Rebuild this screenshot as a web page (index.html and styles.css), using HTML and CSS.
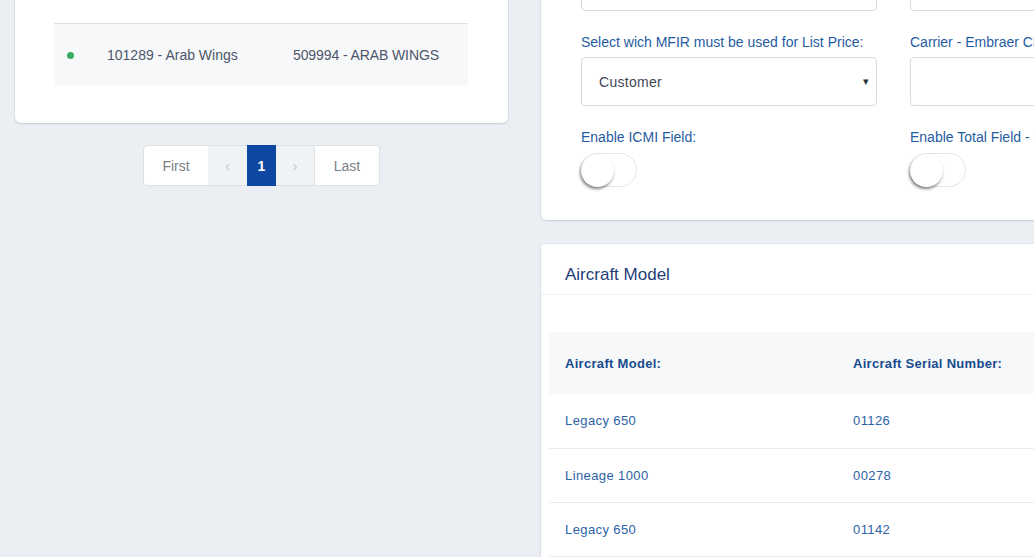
FILE: index.html
```html
<!DOCTYPE html>
<html lang="en">
<head>
<meta charset="utf-8">
<title>Customer settings</title>
<link rel="stylesheet" href="styles.css">
</head>
<body>
<div class="page">
  <div class="col-left">
    <div class="card list-card">
      <div class="list-row">
        <span class="status-dot"></span>
        <span class="cell-customer">101289 - Arab Wings</span>
        <span class="cell-operator">509994 - ARAB WINGS</span>
      </div>
    </div>
    <div class="pager-wrap">
      <nav class="pager">
        <span class="pg pg-text">First</span>
        <span class="pg pg-arrow">&#8249;</span>
        <span class="pg pg-active">1</span>
        <span class="pg pg-arrow pg-next">&#8250;</span>
        <span class="pg pg-text pg-last">Last</span>
      </nav>
    </div>
  </div>

  <div class="col-right">
    <div class="card form-card">
      <div class="form-grid">
        <div class="form-group">
          <label class="label">Customer Name:</label>
          <div class="input"></div>
        </div>
        <div class="form-group">
          <label class="label">Operator Name:</label>
          <div class="input"></div>
        </div>
        <div class="form-group">
          <label class="label">Select wich MFIR must be used for List Price:</label>
          <div class="input select"><span>Customer</span><span class="caret">&#9662;</span></div>
        </div>
        <div class="form-group">
          <label class="label">Carrier - Embraer Client Code:</label>
          <div class="input"></div>
        </div>
        <div class="form-group last">
          <label class="label">Enable ICMI Field:</label>
          <div class="toggle"><span class="knob"></span></div>
        </div>
        <div class="form-group last">
          <label class="label">Enable Total Field - Catalog:</label>
          <div class="toggle"><span class="knob"></span></div>
        </div>
      </div>
    </div>

    <div class="card aircraft-card">
      <div class="card-header">Aircraft Model</div>
      <div class="card-body">
        <table class="ac-table">
          <thead>
            <tr><th class="c1">Aircraft Model:</th><th>Aircraft Serial Number:</th><th>Action</th></tr>
          </thead>
          <tbody>
            <tr><td class="c1">Legacy 650</td><td>01126</td><td></td></tr>
            <tr><td class="c1">Lineage 1000</td><td>00278</td><td></td></tr>
            <tr><td class="c1">Legacy 650</td><td>01142</td><td></td></tr>
          </tbody>
        </table>
      </div>
    </div>
  </div>
</div>
</body>
</html>
```

FILE: styles.css
```css
* { box-sizing: border-box; }
html, body {
  margin: 0;
  padding: 0;
  background: #ebeff3;
  overflow: hidden;
  width: 1034px;
  height: 557px;
}
body {
  font-family: "Liberation Sans", Arial, sans-serif;
  color: #4a5468;
}
.page {
  display: flex;
  align-items: flex-start;
  gap: 33px;
  margin-top: -94px;
  padding-left: 15px;
  width: 1400px;
}
.col-left {
  width: 493px;
  flex: none;
}
.col-right {
  width: 760px;
  flex: none;
  display: flex;
  flex-direction: column;
  gap: 24px;
}
.card {
  background: #fff;
  border-radius: 6px;
  box-shadow: 0 1px 2px rgba(60, 80, 110, 0.18), 0 0 0 1px rgba(210, 218, 228, 0.35);
}

/* left list card */
.list-card {
  padding: 117px 40px 37px 39px;
}
.list-row {
  display: flex;
  align-items: center;
  height: 63px;
  background: #f7f8f9;
  border-top: 1px solid #dcdfe3;
  font-size: 14px;
  color: #4c566a;
}
.status-dot {
  width: 7px;
  height: 7px;
  border-radius: 50%;
  background: #3aab62;
  margin-left: 13px;
  flex: none;
}
.cell-customer {
  margin-left: 33px;
  width: 186px;
}
.cell-operator {
  letter-spacing: -0.1px;
}

/* pagination */
.pager-wrap {
  display: flex;
  justify-content: center;
  padding-top: 22px;
}
.pager {
  display: flex;
  height: 41px;
  border: 1px solid #dde1e6;
  border-radius: 4px;
  background: #fff;
  font-size: 14px;
}
.pg {
  display: flex;
  align-items: center;
  justify-content: center;
}
.pg-text {
  width: 64px;
  color: #7a7f86;
}
.pg-last {
  width: 65px;
  border-left: 1px solid #dde1e6;
}
.pg-arrow {
  width: 39px;
  background: #f0f3f6;
  color: #c5c9ce;
  font-size: 15px;
}
.pg-next {
  width: 38px;
}
.pg-active {
  width: 29px;
  margin: -1px 0;
  background: #0e47a1;
  color: #fff;
  font-weight: bold;
}

/* form card */
.form-card {
  padding: 32px 40px 33px 40px;
}
.form-grid {
  display: grid;
  grid-template-columns: 296px 296px;
  column-gap: 33px;
}
.form-group {
  margin-bottom: 22px;
}
.form-group.last {
  margin-bottom: 0;
}
.label {
  display: block;
  font-size: 14px;
  line-height: 18px;
  color: #1f5ca2;
  margin-bottom: 6px;
  white-space: nowrap;
}
.form-group.last .label {
  margin-bottom: 7px;
}
.input {
  height: 49px;
  border: 1px solid #d5dce6;
  border-radius: 4px;
  background: #fff;
}
.select {
  display: flex;
  align-items: center;
  justify-content: space-between;
  padding: 0 7px 0 17px;
  font-size: 14px;
  color: #3f4656;
  letter-spacing: 0.3px;
}
.caret {
  font-size: 11px;
  color: #2b3140;
}
.toggle {
  position: relative;
  width: 56px;
  height: 34px;
  border: 1px solid #e3e5e8;
  border-radius: 17px;
  background: #fff;
}
.knob {
  position: absolute;
  left: -1px;
  top: 0;
  width: 33px;
  height: 33px;
  border-radius: 50%;
  background: #fff;
  box-shadow: -1px 2px 3px rgba(0, 0, 0, 0.5);
}

/* aircraft card */
.aircraft-card {
  border-radius: 4px 4px 0 0;
  min-height: 340px;
}
.card-header {
  height: 51px;
  padding: 12px 24px 0;
  display: flex;
  align-items: center;
  font-size: 17px;
  color: #1f3d78;
  border-bottom: 1px solid #eef0f3;
}
.card-body {
  padding: 37px 0 0 8px;
}
.ac-table {
  width: 100%;
  border-collapse: collapse;
  font-size: 13px;
}
.ac-table th {
  background: #f7f8f9;
  height: 62px;
  text-align: left;
  font-weight: bold;
  color: #174b8e;
  letter-spacing: 0.3px;
  padding: 0 16px;
}
.ac-table td {
  height: 54px;
  padding: 0 16px;
  color: #2c62a6;
  border-bottom: 1px solid #e9ecef;
  letter-spacing: 0.4px;
}
.ac-table .c1 {
  width: 288px;
}
```
